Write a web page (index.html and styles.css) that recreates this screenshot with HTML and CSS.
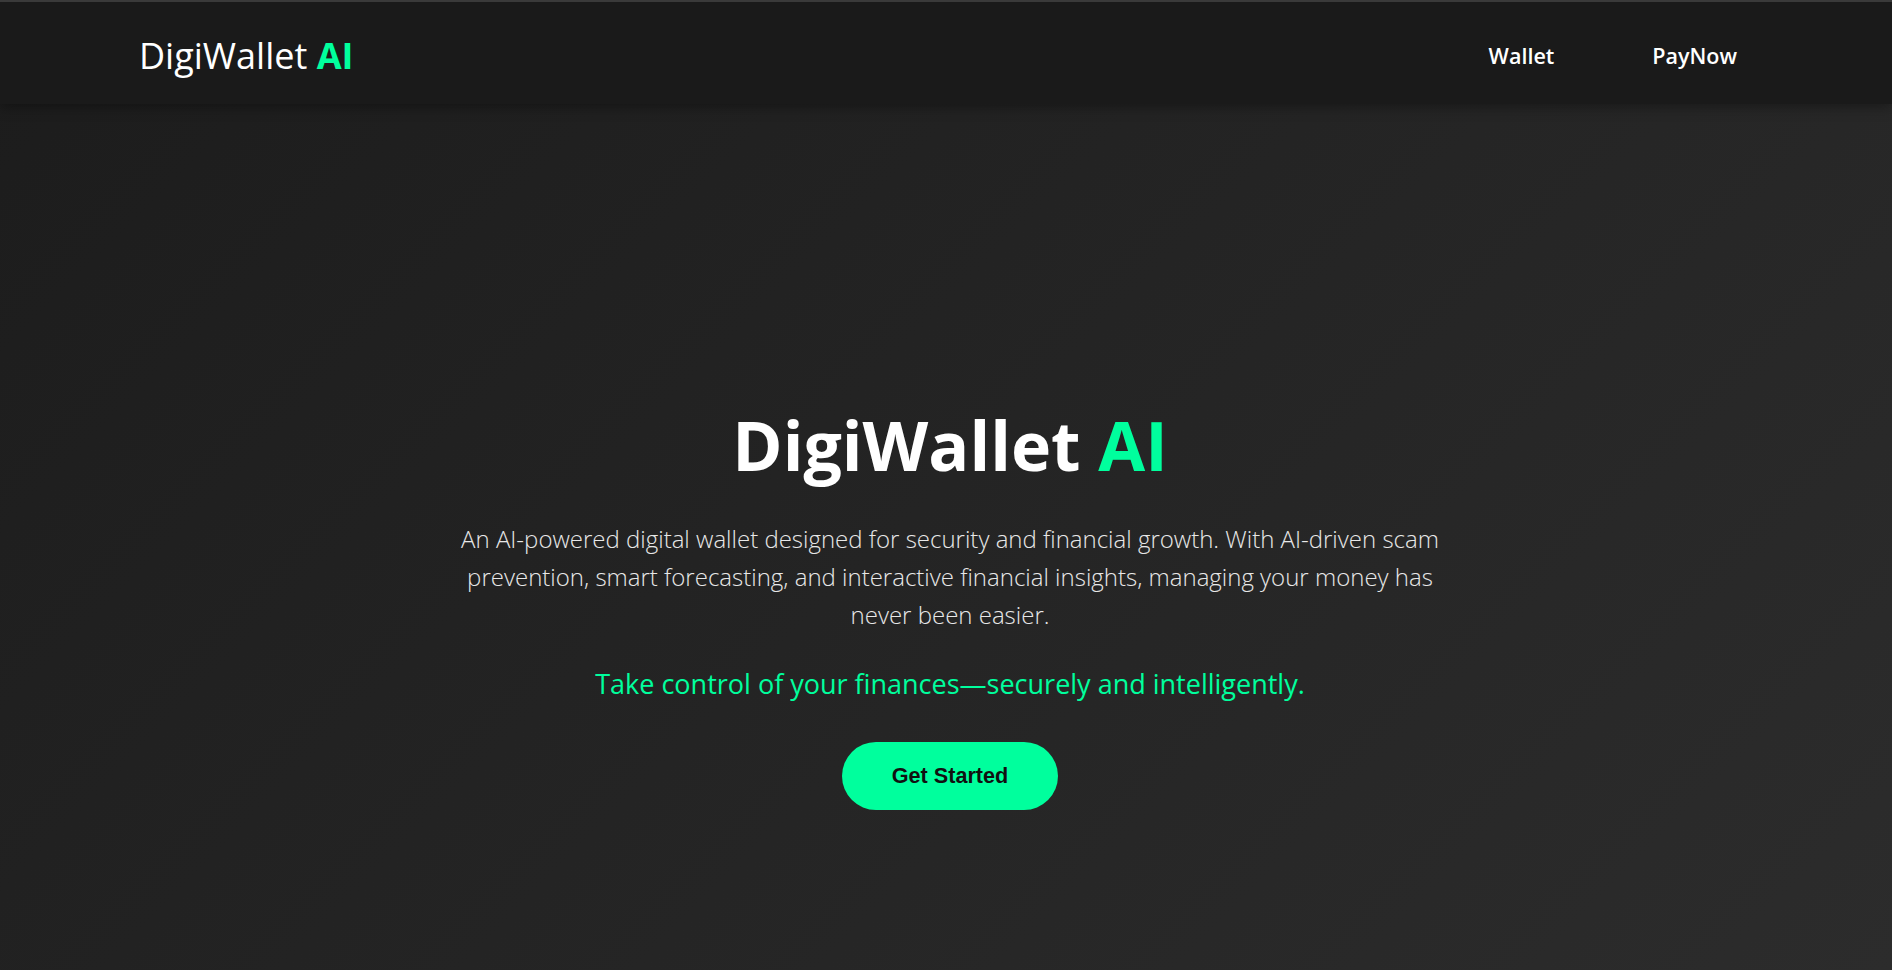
FILE: index.html
```html
<!DOCTYPE html>
<html lang="en">
<head>
<meta charset="utf-8">
<title>DigiWallet AI</title>
<link rel="stylesheet" href="styles.css">
</head>
<body>
  <header class="site-header">
    <a class="logo" href="#">DigiWallet <span class="accent">AI</span></a>
    <nav class="nav">
      <a class="nav-link" href="#">Wallet</a>
      <a class="nav-link" href="#">PayNow</a>
    </nav>
  </header>
  <main class="hero">
    <h1 class="hero-title">DigiWallet <span class="accent">AI</span></h1>
    <p class="hero-text">An AI-powered digital wallet designed for security and financial growth. With AI-driven scam prevention, smart forecasting, and interactive financial insights, managing your money has never been easier.</p>
    <p class="hero-tagline">Take control of your finances—securely and intelligently.</p>
    <button class="cta" type="button">Get Started</button>
  </main>
</body>
</html>
```

FILE: styles.css
```css
* { box-sizing: border-box; }
html, body { height: 100%; }
body {
  margin: 0;
  font-family: "Open Sans", "Noto Sans", sans-serif;
  color: #fff;
  background: linear-gradient(135deg, #1c1c1c 0%, #2c2c2c 100%);
  border-top: 2px solid #3a3a3a;
  overflow: hidden;
}
.accent { color: #00ff9d; }
.site-header {
  height: 102px;
  display: flex;
  align-items: center;
  justify-content: space-between;
  padding: 5px 155px 0 139px;
  background: #1a1a1a;
  box-shadow: 0 3px 12px rgba(0,0,0,0.35);
}
.logo {
  color: #fff;
  text-decoration: none;
  font-size: 36px;
  font-weight: 500;
}
.logo .accent { font-weight: 700; }
.nav { display: flex; gap: 98px; }
.nav-link {
  color: #fff;
  text-decoration: none;
  font-size: 21.5px;
  font-weight: 600;
}
.hero {
  display: flex;
  flex-direction: column;
  align-items: center;
  text-align: center;
  padding: 300px 0 0 8px;
}
.hero-title {
  margin: 0;
  font-size: 68px;
  font-weight: 700;
  line-height: 1.2;
}
.hero-text {
  margin: 34px 0 0;
  max-width: 1010px;
  font-size: 24px;
  font-weight: 300;
  line-height: 38px;
  color: #e8e8e8;
}
.hero-tagline {
  margin: 31px 0 0;
  font-size: 27px;
  font-weight: 500;
  color: #00ff9d;
}
.cta {
  margin-top: 40px;
  padding: 21px 50px;
  border: none;
  border-radius: 40px;
  background: #00ff9d;
  color: #111;
  font-family: "Liberation Sans", Arial, sans-serif;
  font-weight: 700;
  font-size: 21.6px;
  cursor: pointer;
}
```
